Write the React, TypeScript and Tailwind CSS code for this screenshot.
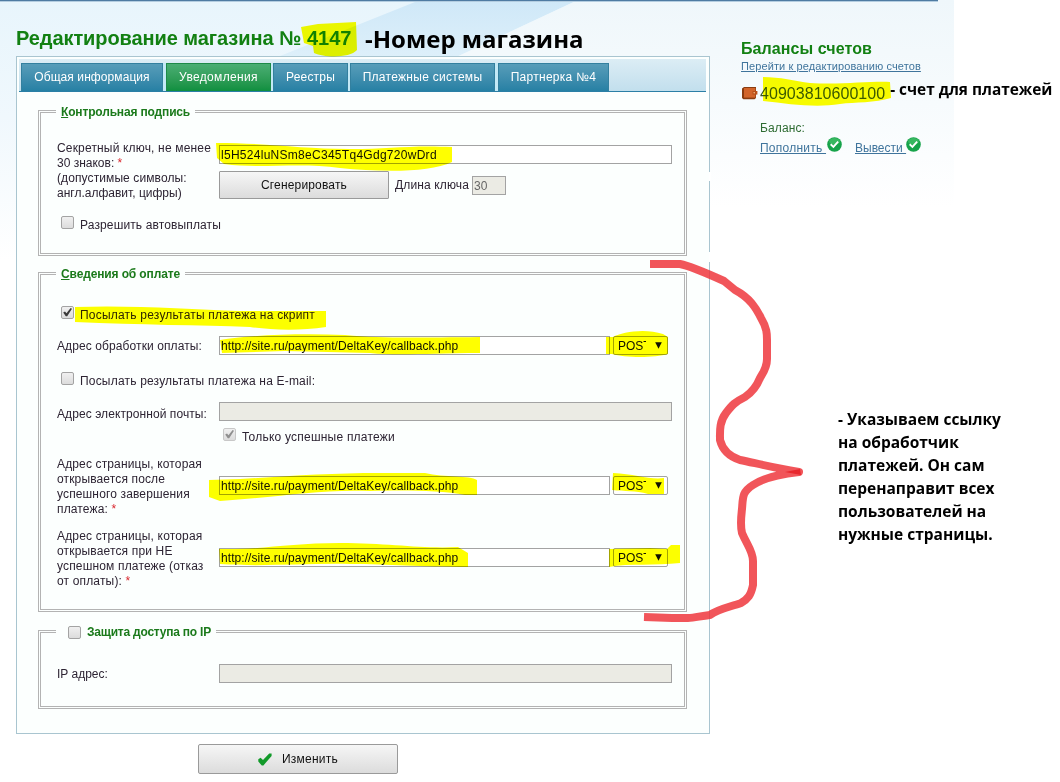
import type { ReactNode } from "react";

function Check({ checked, disabled }: { checked?: boolean; disabled?: boolean }) {
  return (
    <span
      className={
        "block h-[13px] w-[13px] shrink-0 rounded-[2px] border bg-linear-to-b from-[#f0f0f0] to-[#dcdcdc] " +
        (disabled ? "border-[#c8c8c8]" : "border-[#a3a3a3]")
      }
    >
      {checked && (
        <svg viewBox="0 0 11 11" className="block h-[11px] w-[11px] overflow-visible">
          <path
            d="M1.2 5.4 L3 4.6 L4.5 6.2 L8.6 1 L10 1.8 L5.2 9.2 L3.8 9.2 Z"
            fill={disabled ? "#8f8f8f" : "#3a3a3a"}
          />
        </svg>
      )}
    </span>
  );
}

function Group({ legend, className, children }: { legend: ReactNode; className: string; children: ReactNode }) {
  return (
    <fieldset className={"min-w-0 border-[3px] border-double border-[#b3b3b3] pr-3 pl-4 " + className}>
      <legend className="-ml-px h-[15px] px-[5px] pt-px font-bold leading-[15px] whitespace-nowrap text-[#1b7a1b]">{legend}</legend>
      {children}
    </fieldset>
  );
}

function Field({ className = "", children }: { className?: string; children?: ReactNode }) {
  return (
    <div className={"h-[19px] shrink-0 border border-[#a3a3a3] pl-px leading-[18px] whitespace-nowrap " + className}>
      {children}
    </div>
  );
}

function UrlRow() {
  return (
    <div className="flex gap-[3px] text-[#111]">
      <Field className="w-[391px] bg-white tracking-[0.07px]">http://site.ru/payment/DeltaKey/callback.php</Field>
      <div className="flex h-[19px] w-[55px] items-center rounded-[2px] border border-[#a3a3a3] bg-white pl-[4px]">
        <span className="w-[28px] overflow-hidden pt-px leading-[17px]">POST</span>
        <svg viewBox="0 0 7 7" className="ml-[9px] h-[7px] w-[7px]">
          <path d="M0.2 0.3H6.8L3.5 6.8Z" fill="#111" />
        </svg>
      </div>
    </div>
  );
}

function OkBadge() {
  return (
    <svg viewBox="0 0 14 14" className="h-[15px] w-[15px] shrink-0">
      <circle cx="7" cy="7" r="6.8" fill="#17a34a" />
      <ellipse cx="7" cy="4.2" rx="5" ry="3.2" fill="#4cc46e" opacity="0.6" />
      <path d="M3.4 6.8 L6 9.2 L10.4 4.3" fill="none" stroke="#fff" strokeWidth="1.7" />
    </svg>
  );
}

const Star = () => <span className="text-[#d9282f]">*</span>;

const tabs = [
  { label: "Общая информация", cls: "w-[142px] mr-[3px] tracking-[0.08px]" },
  { label: "Уведомления", cls: "w-[105px] mr-[2px] tracking-[0.34px]", active: true },
  { label: "Реестры", cls: "w-[75px] mr-[2px] tracking-[0.2px]" },
  { label: "Платежные системы", cls: "w-[145px] mr-[3px] tracking-[0.28px]" },
  { label: "Партнерка №4", cls: "w-[111px] tracking-[0.28px]" },
];

export default function App() {
  return (
    <div className="relative h-[782px] w-[1060px] overflow-hidden bg-white font-['Liberation_Sans',sans-serif] text-[12px] leading-[15px] text-[#2d2433]">
      {/* page backdrop */}
      <svg className="absolute top-0 left-0 h-[260px] w-[954px]" viewBox="0 0 954 260" preserveAspectRatio="none">
        <defs>
          <linearGradient id="sky" x1="0" y1="0" x2="0" y2="1">
            <stop offset="0" stopColor="#e8f5fc" />
            <stop offset="0.45" stopColor="#f0f8fd" />
            <stop offset="1" stopColor="#ffffff" />
          </linearGradient>
          <linearGradient id="ray" x1="0" y1="0" x2="0" y2="1">
            <stop offset="0" stopColor="#cfe8f8" />
            <stop offset="1" stopColor="#def0fa" />
          </linearGradient>
          <linearGradient id="fade" x1="0" y1="0" x2="0" y2="1">
            <stop offset="0" stopColor="#eff7fb" />
            <stop offset="0.8" stopColor="#ffffff" />
          </linearGradient>
        </defs>
        <rect width="954" height="260" fill="url(#sky)" />
        <path d="M420 0H578L450 60H270Z" fill="url(#ray)" />
        <path d="M578 0H954V260H700V60H450Z" fill="url(#fade)" />
        <rect width="938" height="1" fill="#4f7ba2" />
        <rect y="1" width="938" height="1" fill="#b4cde0" />
      </svg>

      <div className="relative flex">
        <main className="ml-4 w-[694px] shrink-0">
          <h1 className="flex h-[56px] items-start pt-[26px] text-[20px] leading-6 font-bold whitespace-nowrap text-[#128012]">
            <span className="w-[291px] tracking-[-0.08px]">Редактирование магазина №</span>
            <span className="w-[58px]">4147</span>
            <span className="-mt-px font-['Open_Sans','Noto_Sans',sans-serif] text-[24px] leading-7 text-black">-Номер магазина</span>
          </h1>

          <section className="h-[678px] border border-[#a9c5d0] bg-[#fcfffe] p-[2px]">
            <nav className="mr-px flex h-[33px] items-end border-b border-[#2b7fa6] bg-linear-to-b from-[#dcedf5] to-[#c2dfed] pl-[2px] text-white">
              <div className="flex bg-[#c3e9f6]">
                {tabs.map((t) => (
                  <div
                    key={t.label}
                    className={
                      "flex h-[28px] shrink-0 items-center justify-center border border-b-0 whitespace-nowrap " +
                      (t.active
                        ? "border-[#1d8a48] bg-linear-to-b from-[#4aae74] to-[#0d8f3f] "
                        : "border-[#33809f] bg-linear-to-b from-[#579db9] to-[#2680a4] ") +
                      t.cls
                    }
                  >
                    {t.label}
                  </div>
                ))}
              </div>
            </nav>

            <div className="flex flex-col pt-[12px] pr-[20px] pl-[19px]">
              <Group
                className="h-[152px]"
                legend={<span className="tracking-[-0.16px]"><u>К</u>онтрольная подпись</span>}
              >
                <div className="flex pt-[22px]">
                  <div className="w-[162px] shrink-0 whitespace-nowrap">
                    <div className="tracking-[0.17px]">Секретный ключ, не менее</div>
                    <div>30 знаков: <Star /></div>
                    <div className="tracking-[0.1px]">(допустимые символы:</div>
                    <div>англ.алфавит, цифры)</div>
                  </div>
                  <div className="pt-[4px]">
                    <Field className="w-[453px] bg-white tracking-[0.28px] text-[#111]">l5H524luNSm8eC345Tq4Gdg720wDrd</Field>
                    <div className="mt-[7px] flex items-center">
                      <div className="flex h-[28px] w-[170px] items-center justify-center rounded-[1px] border border-[#9a9a9a] bg-linear-to-b from-[#f6f6f6] to-[#dcdcdc] tracking-[0.16px] text-[#111]">
                        Сгенерировать
                      </div>
                      <span className="ml-[6px] w-[77px] tracking-[0.13px]">Длина ключа</span>
                      <Field className="w-[34px] bg-[#ebebe4] text-[#666]">30</Field>
                    </div>
                  </div>
                </div>
                <div className="mt-[15px] ml-1 flex">
                  <Check />
                  <span className="ml-[6px] pt-[2px] tracking-[0.13px]">Разрешить автовыплаты</span>
                </div>
              </Group>

              <Group
                className="mt-[10px] h-[346px]"
                legend={<span className="tracking-[-0.13px]"><u>С</u>ведения об оплате</span>}
              >
                <div className="mt-[25px] ml-1 flex">
                  <Check checked />
                  <span className="ml-[6px] pt-[2px] tracking-[0.21px]">Посылать результаты платежа на скрипт</span>
                </div>
                <div className="mt-[13px] flex">
                  <span className="w-[162px] pt-[3px] tracking-[0.1px]">Адрес обработки оплаты:</span>
                  <UrlRow />
                </div>
                <div className="mt-[17px] ml-1 flex">
                  <Check />
                  <span className="ml-[6px] pt-[2px] tracking-[0.19px]">Посылать результаты платежа на E-mail:</span>
                </div>
                <div className="mt-[13px] flex h-[19px]">
                  <span className="w-[162px] pt-[5px] tracking-[0.08px]">Адрес электронной почты:</span>
                  <Field className="w-[453px] bg-[#ebebe4]" />
                </div>
                <div className="mt-[7px] ml-[166px] flex">
                  <Check checked disabled />
                  <span className="ml-[6px] pt-[2px] tracking-[0.22px]">Только успешные платежи</span>
                </div>
                <div className="mt-[12px] flex h-[61px]">
                  <div className="w-[162px] whitespace-nowrap tracking-[0.14px]">
                    <div>Адрес страницы, которая</div>
                    <div>открывается после</div>
                    <div>успешного завершения</div>
                    <div>платежа: <Star /></div>
                  </div>
                  <div className="pt-[19px]"><UrlRow /></div>
                </div>
                <div className="mt-[11px] flex h-[61px]">
                  <div className="w-[162px] whitespace-nowrap tracking-[0.16px]">
                    <div>Адрес страницы, которая</div>
                    <div>открывается при НЕ</div>
                    <div>успешном платеже (отказ</div>
                    <div>от оплаты): <Star /></div>
                  </div>
                  <div className="pt-[19px]"><UrlRow /></div>
                </div>
              </Group>

              <Group
                className="mt-[12px] h-[85px]"
                legend={
                  <span className="-mt-px flex items-center pl-[7px] tracking-[-0.22px]">
                    <Check />
                    <span className="ml-[6px] pt-px">Защита доступа по IP</span>
                  </span>
                }
              >
                <div className="mt-[25px] flex">
                  <span className="w-[162px] pt-[3px]">IP адрес:</span>
                  <Field className="w-[453px] bg-[#ebebe4]" />
                </div>
              </Group>
            </div>
          </section>

          <button className="mt-[10px] ml-[182px] flex h-[30px] w-[200px] items-center rounded-[2px] border border-[#9a9a9a] bg-linear-to-b from-[#f6f6f6] to-[#dcdcdc] pl-[59px] tracking-[0.23px] text-[#111]">
            <svg viewBox="0 0 14 13" className="h-[13px] w-[14px]">
              <path d="M0.3 6.2 L2.6 4.8 L5 7 L11.2 0.6 L13.6 0.6 L13.6 3 L5.4 12.4 L3.8 12.4 L0.3 8.6 Z" fill="#129a2a" />
            </svg>
            <span className="ml-[10px]">Изменить</span>
          </button>
        </main>

        <aside className="ml-[31px] w-[319px] pt-[39px]">
          <h2 className="text-[16px] leading-5 font-bold tracking-[0.08px] text-[#128012]">Балансы счетов</h2>
          <a className="block text-[11px] leading-[15px] tracking-[0.11px] text-[#3f749c] underline">Перейти к редактированию счетов</a>
          <div className="mt-[9px] flex h-[20px] items-center whitespace-nowrap">
            <svg viewBox="0 0 17 14" className="-mt-px h-[14px] w-[17px] shrink-0">
              <path d="M1 2.6 L3 1 H15 V12 L13.5 13.2 H2.4 L1 12Z" fill="#8a3c10" />
              <path d="M3 2H14.4V11.6H3Z" fill="#d2642a" />
              <path d="M11.5 5H16.4V8.6H11.5Z" fill="#b94f18" />
              <circle cx="13.2" cy="6.8" r="0.8" fill="#f5c28c" />
            </svg>
            <span className="ml-[2px] text-[16px] tracking-[0.04px] text-[#3b5a22]">40903810600100</span>
            <span className="-mt-[7px] ml-[5px] font-['Open_Sans','Noto_Sans',sans-serif] text-[15.4px] font-bold text-black">- счет для платежей</span>
          </div>
          <div className="mt-[18px] ml-[19px] tracking-[0.12px] text-[#2e6b32]">Баланс:</div>
          <div className="mt-px ml-[19px] flex whitespace-pre text-[#3f749c]">
            <span className="w-[67px] pt-[4px] tracking-[0.24px] underline">Пополнить </span>
            <OkBadge />
            <span className="ml-[13px] w-[51px] pt-[4px] underline">Вывести </span>
            <OkBadge />
          </div>
          <p className="mt-[252px] ml-[97px] w-[190px] font-['Open_Sans','Noto_Sans',sans-serif] text-[15.5px] leading-[23px] font-bold whitespace-nowrap text-black">
            - Указываем ссылку<br />на обработчик<br />платежей. Он сам<br />перенаправит всех<br />пользователей на<br />нужные страницы.
          </p>
        </aside>
      </div>

      {/* marker strokes over the page */}
      <svg className="pointer-events-none absolute inset-0 mix-blend-multiply" width="1060" height="782" viewBox="0 0 1060 782">
        <g fill="#ffff00">
          <path d="M301 27 L318 24 L356 22 L357 50 C350 58 325 58 314 53 L313 46 L304 43Z" />
          <path d="M216 143 C270 143 300 149 350 149 C390 149 410 145 452 147 L452 162 C430 173 380 172 340 168 C300 162 260 169 224 164 L217 158Z" />
          <path d="M75 307 C130 305 190 309 240 311 L326 311 L326 327 C300 331 270 330 250 327 C200 325 140 325 75 322Z" />
          <path d="M220 340 C250 335 300 333 345 335 C380 338 400 338 480 337 L480 353 C430 353 400 356 370 353 L285 351 L222 353Z" />
          <path d="M606 337 L613 337 C622 332 645 328 663 334 L668 337 L668 354 C655 358 625 358 612 354 L606 354Z" />
          <path d="M209 480 L240 479 C290 476 330 473 380 473 L425 473 C445 478 470 475 477 480 L477 495 L465 495 C440 490 400 490 370 491 C320 489 280 497 220 501 L209 497Z" />
          <path d="M613 473 C635 474 650 480 664 478 L664 494 L648 494 C635 490 625 492 612 490Z" />
          <path d="M219 549 C260 550 290 543 340 543 C390 543 420 549 458 547 L468 553 L468 567 C420 567 390 564 350 564 C310 563 260 567 220 564Z" />
          <path d="M609 549 L650 548 L667 549 L671 545 L680 545 L680 563 C655 566 630 563 609 567Z" />
          <path d="M763 77 C780 77 795 81 810 83 C840 85 870 81 890 82 L891 98 C875 103 855 102 840 104 C815 108 790 104 763 101Z" />
        </g>
      </svg>
      <svg className="pointer-events-none absolute inset-0" width="1060" height="782" viewBox="0 0 1060 782">
        {/* erased spots of the panel border */}
        <path d="M709 172H711V181H709ZM709 252H711V262H709Z" fill="#fff" />
        <path
          d="M650 264H680C690 266 704 272 724 281L735 290C750 298 756 308 761 318C767 328 767 334 767 340V359C767 368 763 373 760 378C756 388 751 393 745 397C735 402 732 405 726 413C719 422 720 432 720 440C722 448 728 456 740 460C755 463 770 467 799 472C780 474 765 477 753 485C742 492 743 497 742 509C741 518 740 525 742 533C747 545 753 551 753 561V585C751 595 748 599 741 603C730 607 718 609 710 615C700 616 695 618 688 618H672L644 617"
          fill="none"
          stroke="#ee3239"
          strokeOpacity="0.83"
          strokeWidth="8"
          strokeLinejoin="round"
        />
        <path d="M785 472L800 469L801 475Z" fill="#e8282e" />
      </svg>
    </div>
  );
}
